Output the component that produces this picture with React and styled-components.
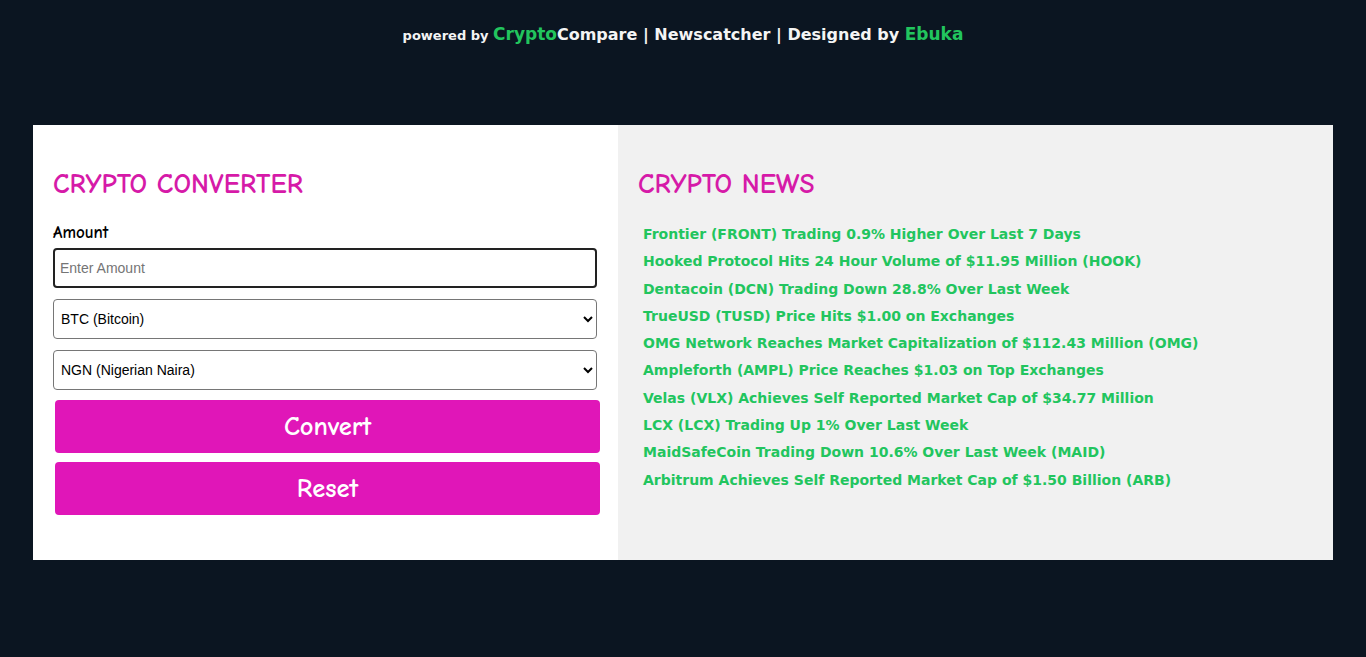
import React, { useState } from 'react'
import styled, { createGlobalStyle } from 'styled-components'

const GlobalStyle = createGlobalStyle`
  body {
    margin: 0;
    background-color: #0b1521;
    font-family: "DejaVu Sans", Verdana, sans-serif;
  }
`;

const comic = `"Comic Sans MS", "Comic Neue", "DejaVu Sans", sans-serif`;

const Page = styled.div`
  min-height: 657px;
  padding: 0 33px;
  box-sizing: border-box;
`;

const Header = styled.div`
  height: 125px;
  padding-top: 24px;
  box-sizing: border-box;
  text-align: center;
  color: #f4f4f4;
  font-weight: bold;
  font-size: 16px;
  font-family: "DejaVu Sans", Verdana, sans-serif;
`;

const Small = styled.span`
  font-size: 13px;
`;

const Green = styled.span`
  color: #22c55e;
  font-size: ${({big}) => big ? '17px' : '16px'};
`;

const Card = styled.div`
  display: flex;
  height: 435px;
`;

const Converter = styled.div`
  width: 585px;
  background-color: #ffffff;
  padding: 44px 21px 0 20px;
  box-sizing: border-box;
  display: flex;
  flex-direction: column;
`;

const News = styled.div`
  flex: 1;
  background-color: #f1f1f1;
  padding: 44px 20px 0 20px;
  box-sizing: border-box;
`;

const Title = styled.h2`
  margin: 0;
  font-family: ${comic};
  font-weight: bold;
  font-size: 27.5px;
  line-height: 30px;
  color: #d61aa8;
`;

const Label = styled.label`
  margin-top: 24px;
  margin-bottom: 6px;
  font-family: ${comic};
  font-weight: bold;
  font-size: 17px;
  color: #000;
`;

const Input = styled.input`
  height: 40px;
  border: 2px solid #222;
  border-radius: 4px;
  padding: 0 5px;
  box-sizing: border-box;
  font-family: "Liberation Sans", Arial, sans-serif;
  font-size: 14px;
  outline: none;
  &::placeholder { color: #757575; }
`;

const Select = styled.select`
  height: 40px;
  margin-top: 11px;
  border: 1px solid #767676;
  border-radius: 4px;
  padding: 0 3px;
  background: #fff;
  font-family: "Liberation Sans", Arial, sans-serif;
  font-size: 14px;
  color: #000;
`;

const Button = styled.button`
  height: 53px;
  margin: ${({first}) => first ? '10px' : '9px'} -3px 0 2px;
  border: none;
  border-radius: 4px;
  background-color: #e016b8;
  color: #fff;
  font-family: ${comic};
  font-weight: bold;
  font-size: 26.5px;
  cursor: pointer;
`;

const List = styled.ul`
  list-style: none;
  margin: 22px 0 0 5px;
  padding: 0;
`;

const Item = styled.li`
  font-family: "DejaVu Sans", Verdana, sans-serif;
  font-weight: bold;
  font-size: 14px;
  line-height: 27.3px;
  color: #22c55e;
`;

const headlines = [
  'Frontier (FRONT) Trading 0.9% Higher Over Last 7 Days',
  'Hooked Protocol Hits 24 Hour Volume of $11.95 Million (HOOK)',
  'Dentacoin (DCN) Trading Down 28.8% Over Last Week',
  'TrueUSD (TUSD) Price Hits $1.00 on Exchanges',
  'OMG Network Reaches Market Capitalization of $112.43 Million (OMG)',
  'Ampleforth (AMPL) Price Reaches $1.03 on Top Exchanges',
  'Velas (VLX) Achieves Self Reported Market Cap of $34.77 Million',
  'LCX (LCX) Trading Up 1% Over Last Week',
  'MaidSafeCoin Trading Down 10.6% Over Last Week (MAID)',
  'Arbitrum Achieves Self Reported Market Cap of $1.50 Billion (ARB)',
];

export default function App() {
  const [amount, setAmount] = useState('');
  return (
    <Page>
      <GlobalStyle />
      <Header>
        <Small>powered by </Small>
        <Green big>Crypto</Green>Compare | Newscatcher | Designed by <Green big>Ebuka</Green>
      </Header>
      <Card>
        <Converter>
          <Title>CRYPTO CONVERTER</Title>
          <Label>Amount</Label>
          <Input placeholder="Enter Amount" value={amount} onChange={(e) => setAmount(e.target.value)} />
          <Select defaultValue="BTC">
            <option value="BTC">BTC (Bitcoin)</option>
            <option value="ETH">ETH (Ethereum)</option>
          </Select>
          <Select defaultValue="NGN">
            <option value="NGN">NGN (Nigerian Naira)</option>
            <option value="USD">USD (US Dollar)</option>
          </Select>
          <Button first>Convert</Button>
          <Button>Reset</Button>
        </Converter>
        <News>
          <Title>CRYPTO NEWS</Title>
          <List>
            {headlines.map((h) => (
              <Item key={h}>{h}</Item>
            ))}
          </List>
        </News>
      </Card>
    </Page>
  )
}
